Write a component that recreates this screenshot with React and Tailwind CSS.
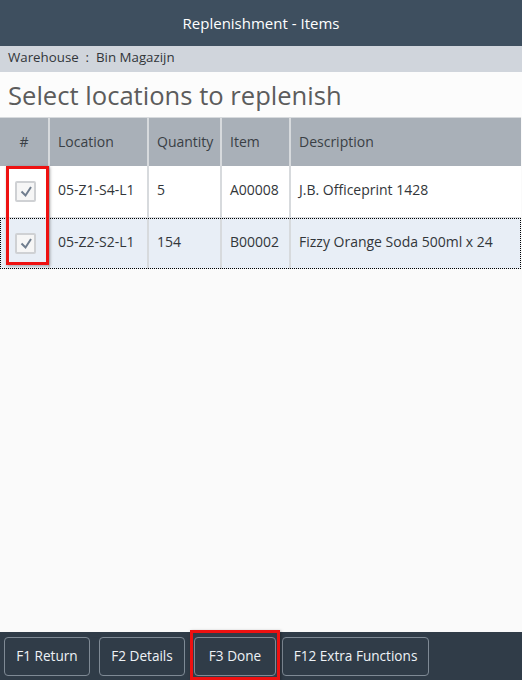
import React from "react";

const rows = [
  { loc: "05-Z1-S4-L1", qty: "5", item: "A00008", desc: "J.B. Officeprint 1428" },
  { loc: "05-Z2-S2-L1", qty: "154", item: "B00002", desc: "Fizzy Orange Soda 500ml x 24" },
];

function Check() {
  return (
    <div className="relative w-[21px] h-[21px] border-2 border-[#cfd1d4] rounded-[2px] bg-[#f6f6f6]">
      <svg className="absolute -left-[2px] -top-[2px]" width="21" height="21" viewBox="0 0 21 21">
        <path d="M6.5 10.5 L10.5 14.5 L16 6" fill="none" stroke="#6f7d8e" strokeWidth="2" />
      </svg>
    </div>
  );
}

export default function App() {
  return (
    <div
      className="w-[522px] h-[680px] flex flex-col bg-[#fafafa] overflow-hidden"
      style={{ fontFamily: '"Open Sans", "Noto Sans", sans-serif' }}
    >
      <div className="h-[46px] bg-[#3e4f5f] text-white text-[15px] flex items-center justify-center shrink-0">
        Replenishment - Items
      </div>
      <div className="h-[26px] bg-[#d0d5dc] text-[#32363a] text-[13.3px] flex items-center px-[8px] pb-[3px] shrink-0">
        Warehouse&nbsp; : &nbsp;Bin Magazijn
      </div>
      <div className="h-[45px] bg-[#fcfcfc] text-[#5c5c5c] text-[25.6px] flex items-center px-[8px] pt-[3px] shrink-0">
        Select locations to replenish
      </div>
      <div className="relative flex-1">
        <table className="w-[521px] border-collapse text-[14px] text-[#32363a] table-fixed">
          <colgroup>
            <col className="w-[49px]" />
            <col className="w-[99px]" />
            <col className="w-[73px]" />
            <col className="w-[69px]" />
            <col />
          </colgroup>
          <thead>
            <tr className="h-[48px] bg-[#a9b0b8] text-[#3a3f45]">
              <th className="font-normal text-center border-r-2 border-[#d7dadd] border-t border-t-[#d7dadd]">#</th>
              <th className="font-normal text-left px-[8px] border-r-2 border-[#d7dadd] border-t border-t-[#d7dadd]">Location</th>
              <th className="font-normal text-left px-[8px] border-r-2 border-[#d7dadd] border-t border-t-[#d7dadd]">Quantity</th>
              <th className="font-normal text-left px-[8px] border-r-2 border-[#d7dadd] border-t border-t-[#d7dadd]">Item</th>
              <th className="font-normal text-left px-[8px] border-t border-t-[#d7dadd]">Description</th>
            </tr>
          </thead>
          <tbody>
            {rows.map((r, i) => (
              <tr
                key={r.loc}
                className={
                  i === 1
                    ? "h-[51px] bg-[#e8eef6] outline-1 outline-dotted outline-black -outline-offset-1"
                    : "h-[52px] bg-white border-b border-[#dadcdf]"
                }
              >
                <td className="border-r-2 border-[#d7dadd] pl-[15px]">
                  <Check />
                </td>
                <td className="px-[8px] pb-[3px] border-r-2 border-[#d7dadd]">{r.loc}</td>
                <td className="px-[8px] pb-[3px] border-r-2 border-[#d7dadd]">{r.qty}</td>
                <td className="px-[8px] pb-[3px] border-r-2 border-[#d7dadd]">{r.item}</td>
                <td className="px-[8px] pb-[3px]">{r.desc}</td>
              </tr>
            ))}
          </tbody>
        </table>
        <div className="absolute left-[6px] top-[49px] w-[43px] h-[99px] border-[3px] border-[#ee1111] shadow-[1px_1px_3px_rgba(0,0,0,0.35)] pointer-events-none" />
      </div>
      <div className="h-[48px] bg-[#303c48] shrink-0 flex items-center gap-[9px] px-[4px] relative">
        <button className="h-[39px] w-[86px] border border-[#7f8a95] rounded-[4px] text-[#eef2f6] text-[13.6px]">F1 Return</button>
        <button className="h-[39px] w-[86px] border border-[#7f8a95] rounded-[4px] text-[#eef2f6] text-[13.6px]">F2 Details</button>
        <button className="h-[39px] w-[82px] border border-[#7f8a95] rounded-[4px] text-[#eef2f6] text-[13.6px]">F3 Done</button>
        <button className="h-[39px] w-[147px] -ml-[3px] border border-[#7f8a95] rounded-[4px] text-[#eef2f6] text-[13.6px]">F12 Extra Functions</button>
        <div className="absolute left-[190px] top-[-2px] w-[90px] h-[50px] border-[3px] border-[#ee1111] shadow-[1px_1px_3px_rgba(0,0,0,0.35)] pointer-events-none" />
      </div>
    </div>
  );
}
